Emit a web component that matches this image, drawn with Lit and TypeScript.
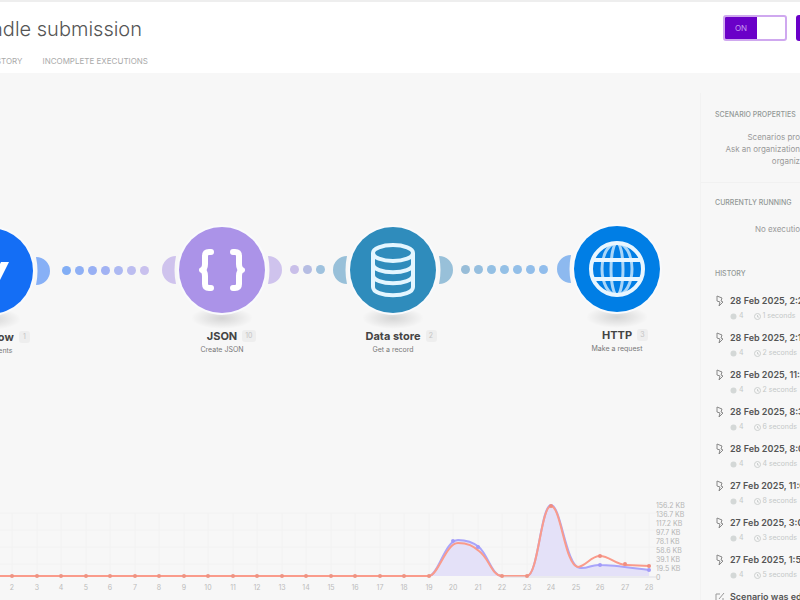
import { LitElement, html, svg, css } from "lit";
import { customElement } from "lit/decorators.js";

interface Module {
  name: string;
  note: string;
  count: string;
  x: number;
  y: number;
  color: string;
  soft: string;
  icon: unknown;
  left: boolean;
  right: boolean;
}

const braces = svg`<g fill="none" stroke="#fff" stroke-width="6" stroke-linejoin="round" stroke-linecap="round">
  <path d="M34 27h-2q-4 0-4 4v8q0 5-3 6q3 1 3 6v8q0 4 4 4h2"/>
  <path d="M56 27h2q4 0 4 4v8q0 5 3 6q-3 1-3 6v8q0 4-4 4h-2"/></g>`;

const database = svg`<g fill="none" stroke="#e4f6ff" stroke-width="4">
  <ellipse cx="45" cy="28" rx="20" ry="8"/>
  <path d="M25 28v34c0 11 40 11 40 0V28M25 39c0 11 40 11 40 0M25 50c0 11 40 11 40 0"/></g>`;

const globe = svg`<g fill="none" stroke="#e8f6ff" stroke-width="4">
  <g stroke-width="3" stroke="#a9d6f8"><ellipse cx="45" cy="45" rx="15" ry="26"/><ellipse cx="45" cy="45" rx="6" ry="26"/></g>
  <circle cx="45" cy="45" r="26"/><path d="M21 36h48M21 55h48"/></g>`;

const flow = svg`<path d="M64 36h-8l-9 17-2-17h-8l-10 17-1-17h-9l5 26h9l9-16 2 16h9z" fill="#fff"/>`;

const modules: Module[] = [
  { name: "Webflow", note: "Watch Events", count: "1", x: -10, y: 198, color: "#146ef5", soft: "#87b0f6", icon: flow, left: false, right: true },
  { name: "JSON", note: "Create JSON", count: "10", x: 222, y: 197, color: "#ab93e8", soft: "#cfc3ed", icon: braces, left: true, right: true },
  { name: "Data store", note: "Get a record", count: "2", x: 393, y: 197, color: "#2f8cbc", soft: "#98c0d9", icon: database, left: true, right: true },
  { name: "HTTP", note: "Make a request", count: "3", x: 617, y: 196, color: "#007ee5", soft: "#8db9ef", icon: globe, left: true, right: false },
];

const links = [
  { x: 62, y: 198, colors: ["#82aef5", "#8fb0f5", "#98b0f4", "#a1b2f3", "#adb9f2", "#bcbdf0", "#c9c1ee"] },
  { x: 290, y: 197, colors: ["#c9bfe9", "#b6bde3", "#9fc2de"] },
  { x: 461, y: 197, colors: ["#98bdd8", "#96bfdf", "#94c0e4", "#94c0e6", "#93bfe8", "#92beea", "#91bdec"] },
];

const runs = [
  ["28 Feb 2025, 2:27", "4", "1 seconds"],
  ["28 Feb 2025, 2:19", "4", "2 seconds"],
  ["28 Feb 2025, 11:47", "4", "2 seconds"],
  ["28 Feb 2025, 8:39", "4", "6 seconds"],
  ["28 Feb 2025, 8:05", "4", "4 seconds"],
  ["27 Feb 2025, 11:06", "4", "8 seconds"],
  ["27 Feb 2025, 3:03", "4", "3 seconds"],
  ["27 Feb 2025, 1:58", "4", "5 seconds"],
];

const scale = ["156.2 KB", "136.7 KB", "117.2 KB", "97.7 KB", "78.1 KB", "58.6 KB", "39.1 KB", "19.5 KB", "0"];
const days = Array.from({ length: 27 }, (_, i) => i + 2);
const dayX = (d: number) => Math.round(12 + (d - 2) * 24.5);

@customElement("app-root")
export class AppRoot extends LitElement {
  static styles = css`
    :host { display: flex; flex-direction: column; height: 100vh; overflow: hidden; background: #f7f7f7; color: #555; font-family: Inter, "Liberation Sans", sans-serif; }
    * { box-sizing: border-box; }
    h1, h2, p, ul { margin: 0; padding: 0; font-weight: 400; }
    ul { list-style: none; }
    header { display: flex; justify-content: space-between; flex: none; height: 73px; background: #fff; border-top: 2px solid #eee; overflow: hidden; }
    .heading { width: 148px; display: flex; flex-direction: column; align-items: flex-end; overflow: hidden; white-space: nowrap; }
    h1 { margin-top: 15px; padding-right: 6px; font-size: 20px; line-height: 24px; font-weight: 300; color: #555; }
    nav { display: flex; gap: 20px; margin-top: 15px; }
    nav a { font-size: 8px; line-height: 10px; color: #aaa; text-decoration: none; }
    .actions { display: flex; gap: 9px; margin: 13px -36px 0 0; }
    .switch { position: relative; display: flex; width: 64px; height: 26px; border: 2px solid #cfa8ef; border-radius: 3px; background: #fff; overflow: hidden; }
    .switch input { position: absolute; inset: 0; width: 100%; height: 100%; margin: 0; opacity: 0; }
    .on { width: 32px; background: #6a00c8; color: #c79bf0; font-size: 8px; line-height: 22px; text-align: center; }
    .run { width: 40px; height: 26px; border: 0; border-radius: 3px; background: #6a00c8; }
    main { flex: 1; display: flex; min-height: 0; }
    .canvas { flex: 1; min-width: 0; display: flex; flex-direction: column; position: relative; overflow: hidden; }
    .scene { flex: 1; position: relative; }
    .module { position: absolute; width: 140px; margin: -45px 0 0 -70px; text-align: center; }
    .module svg { display: block; width: 140px; height: 104px; }
    .name { display: flex; align-items: center; justify-content: center; font-size: 11px; line-height: 14px; font-weight: 700; color: #444; }
    .label { position: relative; }
    .count { position: absolute; left: 100%; top: 1px; margin-left: 5px; padding: 0 3px; min-width: 11px; border-radius: 3px; background: #eee; color: #c4c4c4; font-size: 7px; line-height: 12px; font-weight: 400; }
    .note { font-size: 7px; line-height: 13px; color: #777; }
    .link { position: absolute; display: flex; gap: 4px; margin-top: -5px; }
    .dot { width: 9px; height: 9px; border-radius: 50%; }
    .chart { flex: none; display: flex; justify-content: flex-end; padding-right: 12px; }
    .plot { flex: none; display: block; width: 656px; height: 100px; }
    .plot text { font-size: 7px; fill: #bbb; text-anchor: middle; }
    .scale { width: 32px; flex: none; padding-top: 1px; font-size: 7px; line-height: 9px; color: #b5b5b5; white-space: nowrap; }
    aside { flex: none; width: 100px; margin-top: 20px; padding-left: 15px; border-left: 1px solid #f2f2f2; overflow: hidden; white-space: nowrap; }
    h2 { font-size: 7px; line-height: 12px; font-weight: 500; color: #929896; }
    section { margin-left: -15px; padding-left: 14px; }
    .block { padding-top: 16px; height: 90px; border-bottom: 1px solid #f1f1f1; }
    .running { padding-top: 14px; height: 85px; }
    .info { display: flex; flex-direction: column; align-items: flex-end; margin-top: 10px; font-size: 8px; line-height: 12px; color: #999; }
    .running .info { margin-top: 14px; }
    .item { display: flex; gap: 5px; height: 37px; }
    .item svg { flex: none; width: 10px; height: 12px; }
    .date { font-size: 9px; line-height: 12px; font-weight: 600; color: #555; }
    .meta { display: flex; align-items: center; gap: 2px; margin-top: 4px; font-size: 7px; line-height: 10px; color: #c4c8c7; }
    .meta svg { width: 7px; height: 7px; }
    .meta .time { margin-left: 8px; }
    .history { margin-top: 15px; }
  `;

  private module(m: Module) {
    return html`<div class="module" style="left:${m.x}px;top:${m.y}px">
      <svg viewBox="-25 0 140 104" aria-hidden="true">
        <defs><radialGradient id="shade"><stop offset="0" stop-color="#000" stop-opacity=".14"/><stop offset="1" stop-color="#000" stop-opacity="0"/></radialGradient></defs>
        <ellipse cx="45" cy="93" rx="31" ry="11" fill="url(#shade)"/>
        ${m.left ? svg`<path d="M-1 31a14 14 0 0 0 0 28q-3-14 0-28z" fill="${m.soft}"/>` : ""}
        ${m.right ? svg`<path d="M91 31a14 14 0 0 1 0 28q3-14 0-28z" fill="${m.soft}"/>` : ""}
        <circle cx="45" cy="45" r="45" fill="#f9fafc"/>
        <circle cx="45" cy="45" r="43" fill="${m.color}"/>${m.icon}
      </svg>
      <div class="name"><span class="label">${m.name}<span class="count">${m.count}</span></span></div>
      <div class="note">${m.note}</div>
    </div>`;
  }

  private chart() {
    return html`<div class="chart">
      <svg class="plot" viewBox="0 0 656 100" role="img" aria-label="Daily operations and data transfer">
        <g stroke="#f2f2f2">${[13, 30, 47, 64].map((y) => svg`<path d="M0 ${y}H656"/>`)}
          ${days.map((d) => svg`<path d="M${dayX(d)} 13V76"/>`)}</g>
        <path d="M0 76H429C438 76 445 40 458 40C468 40 474 43 479 47C488 55 492 76 502 76H527C538 76 541 5 551 5C561 5 566 67 580 68C588 69 592 64 600 65C612 65 625 67 649 70V76Z" fill="#e4e1f8"/>
        <path d="M429 76C438 76 445 40 458 40C468 40 474 43 479 47C488 55 492 76 502 76H527C538 76 541 5 551 5C561 5 566 67 580 68C588 69 592 64 600 65C612 65 625 67 649 70" fill="none" stroke="#a9a5fa" stroke-width="2"/>
        <path d="M0 76H429C438 76 446 43 458 43C468 43 473 46 479 51C489 58 492 76 502 76H527C538 76 541 6 551 6C561 6 565 66 578 67C586 66 591 56 600 56C610 56 615 65 627 65L649 66" fill="none" stroke="#fa9b8b" stroke-width="2"/>
        <path d="M502 77H656" stroke="#dddde4"/>
        ${days.filter((d) => d < 20 || d === 22 || d === 23).map((d) => svg`<circle cx="${dayX(d)}" cy="76" r="2" fill="#ee9382"/>`)}
        ${[[453, 41], [478, 47], [600, 65], [649, 70]].map(([x, y]) => svg`<circle cx="${x}" cy="${y}" r="2" fill="#a29bf8"/>`)}
        ${[[551, 6], [600, 56], [625, 64], [649, 66]].map(([x, y]) => svg`<circle cx="${x}" cy="${y}" r="2" fill="#f08d80"/>`)}
        ${days.map((d) => svg`<text x="${dayX(d)}" y="90">${d}</text>`)}
      </svg>
      <div class="scale">${scale.map((s) => html`<div>${s}</div>`)}</div>
    </div>`;
  }

  render() {
    return html`
      <header>
        <div class="heading">
          <h1>Handle submission</h1>
          <nav><a href="#history">HISTORY</a><a href="#incomplete">INCOMPLETE EXECUTIONS</a></nav>
        </div>
        <div class="actions">
          <label class="switch"><input type="checkbox" role="switch" checked /><span class="on">ON</span></label>
          <button class="run" aria-label="Edit"></button>
        </div>
      </header>
      <main>
        <div class="canvas">
          <div class="scene">
            ${links.map((l) => html`<div class="link" style="left:${l.x}px;top:${l.y}px">${l.colors.map((c) => html`<span class="dot" style="background:${c}"></span>`)}</div>`)}
            ${modules.map((m) => this.module(m))}
          </div>
          ${this.chart()}
        </div>
        <aside>
          <section class="block">
            <h2>SCENARIO PROPERTIES</h2>
            <p class="info"><span>Scenarios pro</span><span>Ask an organization</span><span>organiz</span></p>
          </section>
          <section class="running">
            <h2>CURRENTLY RUNNING</h2>
            <p class="info"><span>No executio</span></p>
          </section>
          <section>
            <h2>HISTORY</h2>
            <ul class="history">
              ${runs.map(([date, ops, time]) => html`<li class="item">
                <svg viewBox="0 0 10 12" fill="none" stroke="#888" aria-hidden="true"><path d="M2 1l5 2-1 3 2 1-4 4 1-4-3-1z"/></svg>
                <div>
                  <div class="date">${date}</div>
                  <div class="meta">
                    <svg viewBox="0 0 7 7" aria-hidden="true"><circle cx="3.5" cy="3.5" r="3" fill="#d4d8d7"/></svg>${ops}
                    <svg class="time" viewBox="0 0 7 7" fill="none" stroke="#ccd0cf" aria-hidden="true"><circle cx="3.5" cy="3.5" r="3"/><path d="M3.5 2v2h1.500"/></svg>${time}
                  </div>
                </div>
              </li>`)}
              <li class="item">
                <svg viewBox="0 0 10 12" fill="none" stroke="#999" aria-hidden="true"><path d="M5 3H1v8h7V7M4 8l5-6"/></svg>
                <div class="date">Scenario was edited</div>
              </li>
            </ul>
          </section>
        </aside>
      </main>`;
  }
}
